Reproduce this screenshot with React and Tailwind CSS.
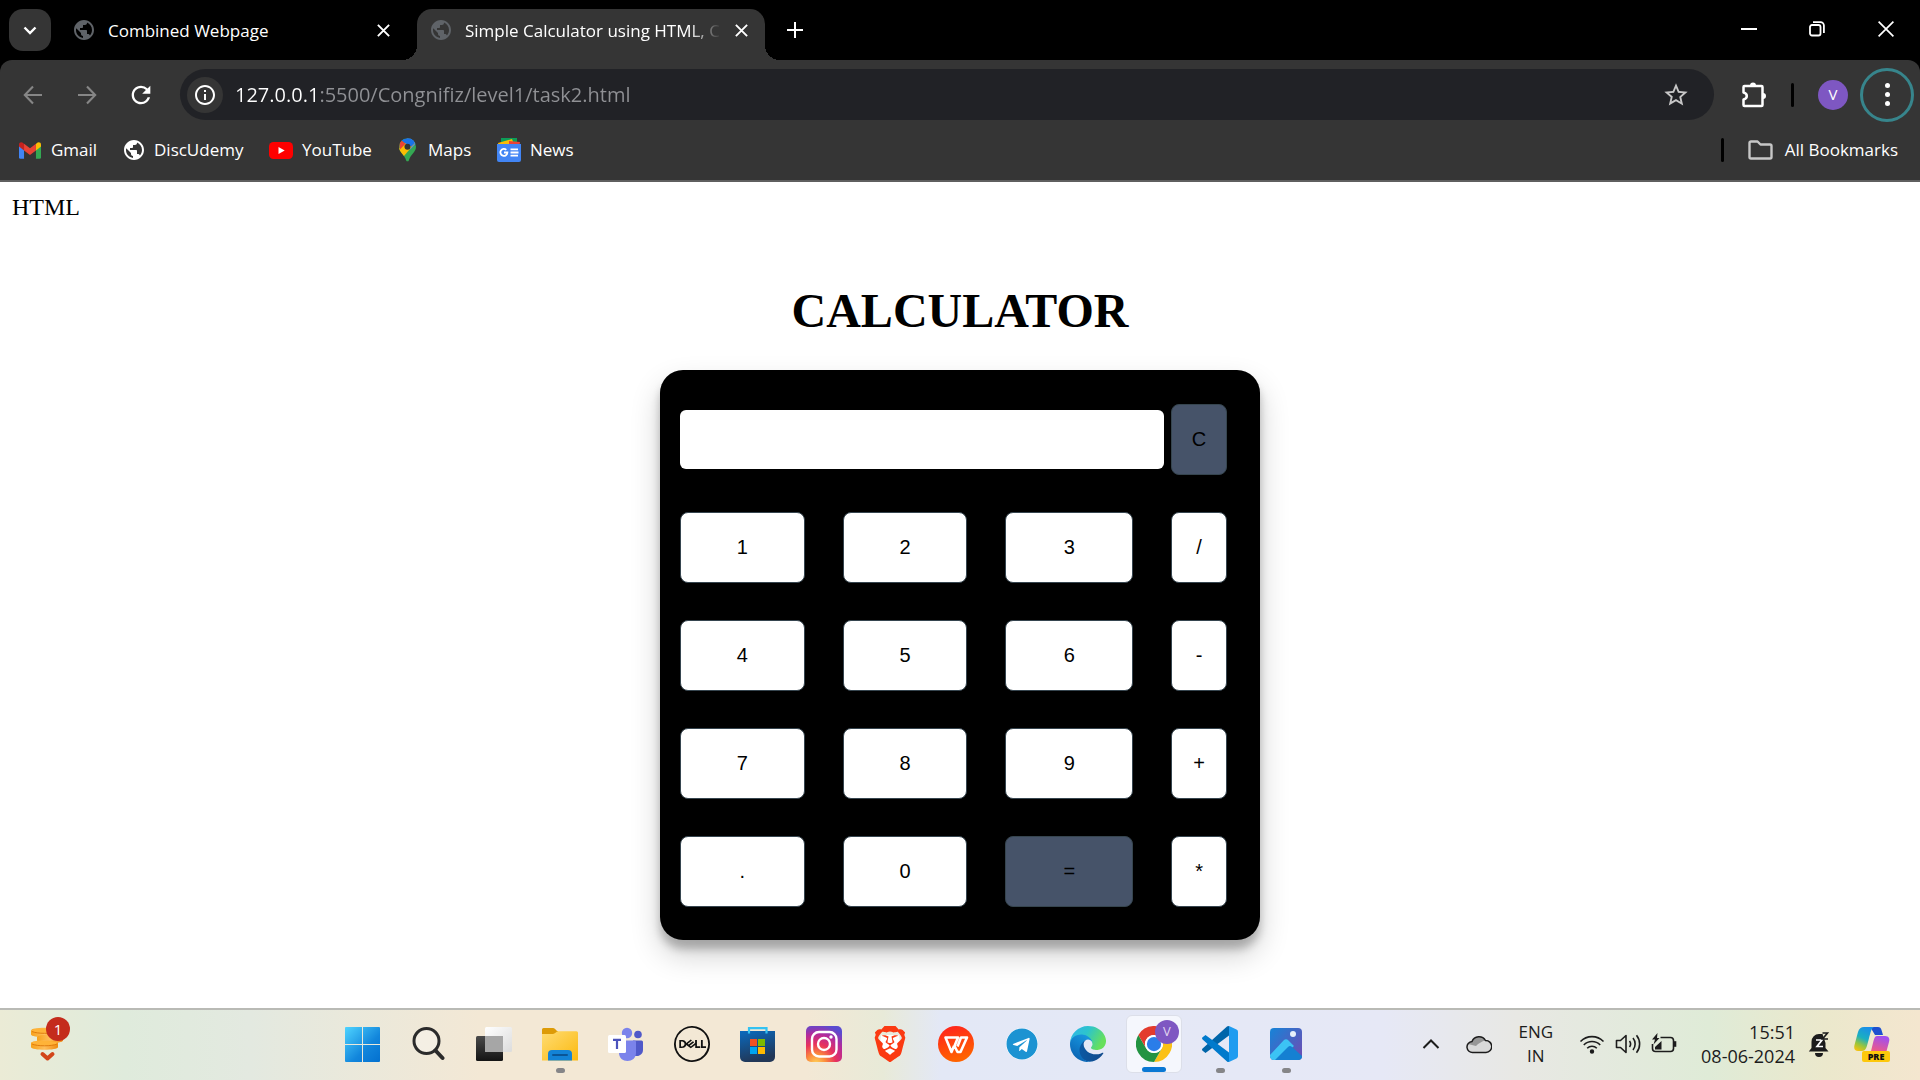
import React, { useState } from "react";
import { MdPublic, MdInfoOutline, MdStarOutline, MdRefresh } from "react-icons/md";
import { SiBrave, SiDell } from "react-icons/si";
import { FaTelegram } from "react-icons/fa";

function Cross({ className }) {
  return (
    <svg viewBox="0 0 16 16" className={className} fill="none" stroke="currentColor" strokeWidth="2">
      <path d="M2 2l12 12M14 2L2 14" />
    </svg>
  );
}

function TabStrip() {
  return (
    <header className="flex h-[60px] items-start bg-black text-white">
      <button aria-label="Search tabs" className="mt-[9px] ml-[9px] flex size-[42px] items-center justify-center rounded-[14px] bg-[#353535]">
        <svg viewBox="0 0 16 16" className="size-4" fill="none" stroke="white" strokeWidth="2.4">
          <path d="M2.5 5.5L8 11l5.500-5.500" />
        </svg>
      </button>
      <div className="mt-[9px] ml-[21px] flex h-[42px] w-[323px] items-center text-[17px]">
        <MdPublic className="size-6 text-[#5f6368]" />
        <a href="#combined" className="ml-3 flex-1 truncate pt-0.5">Combined Webpage</a>
        <button aria-label="Close Combined Webpage" className="flex size-6 items-center justify-center">
          <Cross className="size-[15px]" />
        </button>
      </div>
      <div className="relative mt-[9px] ml-[22px] flex h-[51px] w-[348px] rounded-t-[15px] bg-[#353535] pr-3 pb-[9px] pl-3 text-[17px]">
        <span className="absolute bottom-0 -left-[15px] size-[15px] bg-[radial-gradient(circle_at_0_0,#000_15px,#353535_15px)]" />
        <span className="absolute -right-[15px] bottom-0 size-[15px] bg-[radial-gradient(circle_at_100%_0,#000_15px,#353535_15px)]" />
        <div className="flex min-w-0 flex-1 items-center">
          <MdPublic className="size-6 shrink-0 text-[#5f6368]" />
          <a href="#calculator" className="ml-3 pt-0.5 whitespace-nowrap [mask-image:linear-gradient(to_right,#000_224px,transparent_256px)]">
            Simple Calculator using HTML, C
          </a>
          <button aria-label="Close Simple Calculator" className="ml-auto flex size-6 shrink-0 items-center justify-center">
            <Cross className="size-[15px]" />
          </button>
        </div>
      </div>
      <button aria-label="New tab" className="mt-[18px] ml-[18px] flex size-6 items-center justify-center">
        <svg viewBox="0 0 16 16" className="size-4" stroke="white" strokeWidth="2"><path d="M8 0v16M0 8h16" /></svg>
      </button>
      <div className="ml-auto flex">
        <button aria-label="Minimize" className="flex h-[58px] w-[68px] items-center justify-center">
          <svg viewBox="0 0 16 16" className="size-4" stroke="white" strokeWidth="2"><path d="M0 8h16" /></svg>
        </button>
        <button aria-label="Restore" className="flex h-[58px] w-[68px] items-center justify-center">
          <svg viewBox="0 0 16 16" className="size-4" fill="none" stroke="white" strokeWidth="1.8">
            <rect x="1" y="4" width="10.5" height="10.5" rx="2" />
            <path d="M4 1.2h7.5a3.4 3.4 0 0 1 3.4 3.4V12" />
          </svg>
        </button>
        <button aria-label="Close window" className="flex h-[58px] w-[69px] items-center justify-center">
          <svg viewBox="0 0 16 16" className="size-4" stroke="white" strokeWidth="1.7"><path d="M.6.6l14.8 14.8M15.4.6L.6 15.4" /></svg>
        </button>
      </div>
    </header>
  );
}

function ArrowIcon({ className }) {
  return (
    <svg viewBox="0 0 20 20" className={className} fill="none" stroke="#868686" strokeWidth="2.1">
      <path d="M19 10H2M10 1.500L1.800 10l8.200 8.500" />
    </svg>
  );
}

function Toolbar() {
  const [url, setUrl] = useState("127.0.0.1:5500/Congnifiz/level1/task2.html");
  return (
    <div className="flex h-[69px] items-center text-white">
      <button aria-label="Back" className="ml-[23px] shrink-0"><ArrowIcon className="size-5" /></button>
      <button aria-label="Forward" className="ml-[34px] shrink-0"><ArrowIcon className="size-5 rotate-180" /></button>
      <button aria-label="Reload" className="ml-[30px] shrink-0"><MdRefresh className="size-7" /></button>
      <div className="ml-[25px] flex h-[51px] flex-1 items-center rounded-full bg-[#212226] pr-6 pl-[7px]">
        <button aria-label="Site information" className="flex size-9 items-center justify-center rounded-full bg-[#353535]">
          <MdInfoOutline className="size-6" />
        </button>
        <input
          aria-label="Address"
          value={url}
          onChange={(e) => setUrl(e.target.value)}
          className="ml-3 min-w-0 flex-1 bg-[linear-gradient(to_right,#fff_82px,#909195_82px)] bg-clip-text text-[20px] text-transparent caret-white outline-none"
        />
        <button aria-label="Bookmark this tab"><MdStarOutline className="size-[28px] text-[#c7c7c7]" /></button>
      </div>
      <button aria-label="Extensions" className="ml-[26px]">
        <svg viewBox="0 0 28 28" className="size-7" fill="none" stroke="white" strokeWidth="2.500" strokeLinejoin="round">
          <path d="M4.500 5h17a1 1 0 0 1 1 1v18a1 1 0 0 1-1 1h-17a1 1 0 0 1-1-1v-5.500c4.400-1 4.400-6 0-7V6a1 1 0 0 1 1-1z" />
          <path d="M10 4.500a3 3 0 0 1 6 0zM23 12a3 3 0 0 1 0 6z" fill="white" stroke="none" />
        </svg>
      </button>
      <span className="ml-[23px] h-6 w-[3px] rounded-full bg-black" />
      <button aria-label="Profile" className="ml-6 flex size-[30px] items-center justify-center rounded-full bg-[#7e57c2] text-[15px]">V</button>
      <button aria-label="Chrome menu" className="mr-1.5 ml-3 flex size-[54px] flex-col items-center justify-center gap-1 rounded-full border-[3px] border-[#37858c]">
        <span className="size-[5px] rounded-full bg-white" />
        <span className="size-[5px] rounded-full bg-white" />
        <span className="size-[5px] rounded-full bg-white" />
      </button>
    </div>
  );
}

function GmailIcon() {
  return (
    <svg viewBox="0 0 24 18" className="h-[17px] w-[22px]">
      <path d="M0 3v13.500A1.500 1.500 0 0 0 1.500 18H5.500V7z" fill="#4285f4" />
      <path d="M24 3v13.500a1.500 1.500 0 0 1-1.500 1.500H18.500V7z" fill="#34a853" />
      <path d="M18.500 2v7L24 4.600V2.500C24 0 21.200-.8 19.500.8z" fill="#fbbc04" />
      <path d="M5.500 2v7L0 4.600V2.500C0 0 2.800-.8 4.500.8z" fill="#c5221f" />
      <path d="M5.500 9V1.700L12 6.600l6.500-4.900V9L12 13.900z" fill="#ea4335" />
    </svg>
  );
}

function MapsIcon() {
  return (
    <svg viewBox="0 0 18 25" className="h-6 w-[17px]">
      <defs><clipPath id="pin"><path d="M9 0a9 9 0 0 1 9 9c0 6-5.500 7.500-7.600 14.500-.5 1.700-2.300 1.700-2.800 0C6 17.500 0 15 0 9a9 9 0 0 1 9-9z" /></clipPath></defs>
      <g clipPath="url(#pin)">
        <path d="M0 0h18v25H0z" fill="#34a853" />
        <path d="M5 5l4-6h10v6l-7 7z" fill="#4285f4" />
        <path d="M5.500 5L0 11v5l5 3L18 4z" fill="#fbbc04" />
        <path d="M6 5L2 2 11-1l8 4-6 6z" fill="#1a73e8" />
        <path d="M0 4l2-2 5 4-6 6z" fill="#ea4335" />
      </g>
      <circle cx="9" cy="9" r="3.200" fill="#353535" />
    </svg>
  );
}

function NewsIcon() {
  return (
    <svg viewBox="0 0 24 24" className="size-6">
      <path d="M4 0h16v8H4z" fill="#0c9d58" />
      <path d="M1 5l14-4 3 8H2z" fill="#fbbc04" />
      <path d="M12 3l11 1-1 6H12z" fill="#ea4335" />
      <path d="M0 6h24v16a2 2 0 0 1-2 2H2a2 2 0 0 1-2-2z" fill="#4285f4" />
      <path d="M7 14.500h3.400A3.500 3.500 0 1 1 9.300 11.800M13.500 11.300H21M13.500 14.500h8M13.500 17.700H21" fill="none" stroke="white" strokeWidth="1.800" />
    </svg>
  );
}

function YoutubeIcon() {
  return (
    <svg viewBox="0 0 24 17" className="h-[17px] w-6">
      <rect width="24" height="17" rx="4.500" fill="#f00" />
      <path d="M9.500 5v7l6.200-3.500z" fill="white" />
    </svg>
  );
}

function Bookmark({ icon, label, className }) {
  return (
    <a href={"#" + label.toLowerCase()} className={"flex items-center " + className}>
      {icon}
      {label}
    </a>
  );
}

function Bookmarks() {
  return (
    <nav aria-label="Bookmarks" className="flex h-[53px] items-center border-b-2 border-[#5f5f5f] pr-[22px] pb-[9px] pl-[19px] text-[17px] text-white">
      <Bookmark className="w-[104px] gap-2.5" icon={<GmailIcon />} label="Gmail" />
      <Bookmark className="w-[146px] gap-2" icon={<MdPublic className="-ml-px size-6" />} label="DiscUdemy" />
      <Bookmark className="w-[130px] gap-[9px]" icon={<YoutubeIcon />} label="YouTube" />
      <Bookmark className="w-[98px] gap-3" icon={<MapsIcon />} label="Maps" />
      <Bookmark className="gap-[9px]" icon={<NewsIcon />} label="News" />
      <span className="ml-auto h-6 w-[3px] rounded-full bg-black" />
      <a href="#all" className="ml-6 flex items-center gap-3">
        <svg viewBox="0 0 25 20" className="h-5 w-[25px]" fill="none" stroke="#c7c7c7" strokeWidth="2.400" strokeLinejoin="round">
          <path d="M1.500 3a1.500 1.500 0 0 1 1.500-1.500h6.500l3 3H22A1.500 1.500 0 0 1 23.500 6v11a1.500 1.500 0 0 1-1.500 1.500H3A1.500 1.500 0 0 1 1.500 17z" />
        </svg>
        All Bookmarks
      </a>
    </nav>
  );
}

const keys = ["1", "2", "3", "/", "4", "5", "6", "-", "7", "8", "9", "+", ".", "0", "=", "*"];

function Calculator() {
  const [value, setValue] = useState("");
  const press = (k) => {
    if (k !== "=") return setValue(value + k);
    const parts = value.split(/([+\-*/])/);
    const [a, op, b] = [Number(parts[0]), parts[1], Number(parts[2])];
    const result = { "+": a + b, "-": a - b, "*": a * b, "/": a / b }[op];
    setValue(result === undefined ? value : String(result));
  };
  return (
    <section aria-label="Calculator" className="w-[600px] max-w-full rounded-[23px] bg-black pt-[34px] pr-[33px] pb-[33px] pl-5 font-['Liberation_Sans',sans-serif] text-[20px] shadow-[0_15px_30px_rgba(0,0,0,0.19),0_9px_9px_rgba(0,0,0,0.23)]">
      <div className="grid grid-cols-[125fr_125fr_128fr_56fr] items-center gap-x-[38px] gap-y-[37px]">
        <div className="col-span-4 flex items-center gap-[7px]">
          <input aria-label="Result" value={value} onChange={(e) => setValue(e.target.value)} className="h-[59px] min-w-0 flex-1 rounded-md bg-white px-3 text-right outline-none" />
          <button onClick={() => setValue("")} className="h-[71px] w-[56px] rounded-lg border border-[#36454f] bg-[#465369] pb-0.5">C</button>
        </div>
        {keys.map((k) => (
          <button
            key={k}
            onClick={() => press(k)}
            className={k === "=" ? "h-[71px] rounded-lg border border-[#36454f] bg-[#465369] pb-0.5" : "h-[71px] rounded-lg border border-[#36454f] bg-white pb-0.5"}
          >
            {k}
          </button>
        ))}
      </div>
    </section>
  );
}

function CoinsIcon() {
  return (
    <svg viewBox="0 0 36 36" className="size-9">
      <defs><linearGradient id="coin" x2="1"><stop stopColor="#f7a11b" /><stop offset=".5" stopColor="#ffbe5a" /><stop offset="1" stopColor="#f08a10" /></linearGradient></defs>
      <g fill="url(#coin)">
        <path d="M1 4.500C1 .8 28 .8 28 4.500v4C28 12 1 12 1 8.500z" />
        <path d="M7 11C7 8 33 8 33 11v3.500c0 3.500-26 3.500-26 0z" />
        <path d="M1 17c0-3.500 27-3.500 27 0v4c0 3.700-27 3.700-27 0z" />
      </g>
      <g fill="#ffb338"><ellipse cx="14.500" cy="4.500" rx="13" ry="2.200" /><ellipse cx="14.500" cy="17" rx="13" ry="2.200" /></g>
      <path d="M2 5.500c5 2.400 20 2.400 25 0M2 18c5 2.400 20 2.400 25 0" fill="none" stroke="#e07c0c" />
      <path d="M12.500 28l5 4.500 5-4.500" fill="none" stroke="#d2451a" strokeWidth="4" strokeLinecap="round" strokeLinejoin="round" />
    </svg>
  );
}

function WindowsIcon() {
  return (
    <svg viewBox="0 0 35 35" className="size-[35px]">
      <defs><linearGradient id="win" gradientUnits="userSpaceOnUse" x1="0" y1="0" x2="35" y2="35"><stop stopColor="#4fd4ff" /><stop offset=".6" stopColor="#1286dc" /><stop offset="1" stopColor="#0370cf" /></linearGradient></defs>
      <path fill="url(#win)" d="M1 0h16v17H0V1a1 1 0 0 1 1-1zM18 0h16a1 1 0 0 1 1 1v16H18zM0 18h17v17H1a1 1 0 0 1-1-1zM18 18h17v16a1 1 0 0 1-1 1H18z" />
    </svg>
  );
}

function SearchIcon() {
  return (
    <svg viewBox="0 0 34 36" className="h-9 w-[34px]" fill="none" stroke="#2b2b2b">
      <circle cx="15.500" cy="15" r="12.500" strokeWidth="3" fill="#fff" fillOpacity=".3" />
      <path d="M24.500 24.500l7 7.500" strokeWidth="4" strokeLinecap="round" />
    </svg>
  );
}

function TaskViewIcon() {
  return (
    <svg viewBox="0 0 36 36" className="size-9">
      <defs>
        <linearGradient id="tvd" x2="0" y2="1"><stop stopColor="#4a4a4a" /><stop offset="1" stopColor="#141414" /></linearGradient>
        <linearGradient id="tvl" x2="1" y2="1"><stop stopColor="#fff" /><stop offset="1" stopColor="#dcdcdc" /></linearGradient>
      </defs>
      <rect x="0" y="10" width="27" height="25" rx="1.500" fill="url(#tvd)" />
      <rect x="9" y="1" width="27" height="25" rx="1.500" fill="url(#tvl)" />
      <path d="M9 10h18v16H10.500A1.500 1.500 0 0 1 9 24.500z" fill="#a6a6a6" />
    </svg>
  );
}

function ExplorerIcon() {
  return (
    <svg viewBox="0 0 36 36" className="size-9">
      <defs><linearGradient id="fold" x2="1" y2="1"><stop stopColor="#ffdc73" /><stop offset="1" stopColor="#fbb90f" /></linearGradient></defs>
      <path d="M0 3.500A1.500 1.500 0 0 1 1.500 2h9.700c1.800 0 3 3.200 4.800 3.200V12H0z" fill="#dd9b07" />
      <path d="M0 8h11c2 0 3-2.800 5-2.800h18.500A1.500 1.500 0 0 1 36 6.700V34.500H0z" fill="url(#fold)" />
      <path d="M6 34.500V28a4 4 0 0 1 4-4h16a4 4 0 0 1 4 4v6.500z" fill="#1383d6" />
      <path d="M11 29h14" stroke="#0a5596" strokeWidth="2" strokeLinecap="round" />
    </svg>
  );
}

function TeamsIcon() {
  return (
    <svg viewBox="0 0 36 36" className="size-9">
      <circle cx="30" cy="8.500" r="3.800" fill="#5059c9" />
      <path d="M25 14.500h8.500A1.500 1.500 0 0 1 35 16v8c0 3.500-3 6-6 6h-5z" fill="#5059c9" />
      <circle cx="19" cy="7" r="5.200" fill="#7b83eb" />
      <path d="M11 14.500h15.500A1.500 1.500 0 0 1 28 16v11c0 5-4 8-8.500 8S11 32 11 27z" fill="#7b83eb" />
      <rect y="9" width="18" height="18" rx="1.500" fill="white" />
      <path d="M5 13.800h8M9 13.800V23" stroke="#4b53bc" strokeWidth="2.200" />
    </svg>
  );
}

function StoreIcon() {
  return (
    <svg viewBox="0 0 36 36" className="size-9">
      <defs><linearGradient id="store" x2=".3" y2="1"><stop stopColor="#0a6abf" /><stop offset="1" stopColor="#213757" /></linearGradient></defs>
      <path d="M0 5h35v26a5 5 0 0 1-5 5H5a5 5 0 0 1-5-5z" fill="url(#store)" />
      <path d="M9 7.500V2.200h17.500v5.300" fill="none" stroke="#33c2f2" strokeWidth="2.200" />
      <path d="M10 13h7v7h-7z" fill="#f25022" /><path d="M18 13h7v7h-7z" fill="#7fba00" />
      <path d="M10 21h7v7h-7z" fill="#00a4ef" /><path d="M18 21h7v7h-7z" fill="#ffb900" />
    </svg>
  );
}

function InstagramIcon() {
  return (
    <svg viewBox="0 0 36 36" className="size-9">
      <defs>
        <radialGradient id="ig" cx=".28" cy="1.050" r="1.100"><stop stopColor="#ffd65a" /><stop offset=".25" stopColor="#fb8a3c" /><stop offset=".5" stopColor="#e8325c" /><stop offset=".75" stopColor="#b52a9b" /><stop offset="1" stopColor="#5a4bd0" /></radialGradient>
      </defs>
      <rect width="36" height="36" rx="5" fill="url(#ig)" />
      <g fill="none" stroke="white" strokeWidth="2.400">
        <rect x="6" y="6" width="24.500" height="24.500" rx="7" />
        <circle cx="18" cy="18" r="6" />
      </g>
      <circle cx="25" cy="11" r="1.700" fill="white" />
    </svg>
  );
}

function BraveIcon() {
  return (
    <svg viewBox="0 0 36 36" className="size-9">
      <path d="M9 9h18l1 8-5 11-5 4-5-4-5-11z" fill="white" />
      <SiBrave size={36} color="#fb3a12" />
    </svg>
  );
}

function WpsIcon() {
  return (
    <svg viewBox="0 0 36 36" className="size-9">
      <defs><linearGradient id="wps" x2=".3" y2="1"><stop stopColor="#ff1f1f" /><stop offset="1" stopColor="#ff6200" /></linearGradient></defs>
      <circle cx="18" cy="18" r="18" fill="url(#wps)" />
      <path d="M16 20l-2.500 6L7.500 11.500H20l-3.500 8.500 3 6h3L29 11.500h-6l-3.500 9" fill="none" stroke="white" strokeWidth="2.600" strokeLinejoin="round" />
    </svg>
  );
}

function EdgeIcon() {
  return (
    <svg viewBox="0 0 256 256" className="size-9">
      <defs>
        <linearGradient id="ed1" x2="1"><stop stopColor="#0c59a4" /><stop offset="1" stopColor="#114a8b" /></linearGradient>
        <linearGradient id="ed2" x1=".8" x2=".3" y2="1"><stop stopColor="#1b9de2" /><stop offset=".5" stopColor="#1180cc" /><stop offset="1" stopColor="#0a61b0" /></linearGradient>
        <linearGradient id="ed3" x2="1" y2=".4"><stop stopColor="#2fb4ec" /><stop offset=".5" stopColor="#2dc4cc" /><stop offset="1" stopColor="#66e05c" /></linearGradient>
      </defs>
      <path fill="url(#ed1)" d="M231 190.500c-3.400 1.800-6.900 3.400-10.500 4.700a101.500 101.500 0 0 1-35.700 6.500c-47 0-88-32.300-88-73.900.1-11.400 6.400-21.800 16.400-27.300-42.600 1.800-53.500 46.100-53.500 72.100 0 73.400 67.700 80.800 82.200 80.800 7.900 0 19.800-2.300 26.900-4.500l1.300-.5a128.300 128.300 0 0 0 66.600-52.800c1.100-1.900.5-4.300-1.300-5.400-1.300-.6-2.900-.6-4.400.3z" />
      <path fill="url(#ed2)" d="M105.700 241.400a79.200 79.200 0 0 1-22.700-21.300 80.700 80.700 0 0 1 29.500-120c3.100-1.500 8.400-4.100 15.500-4a32.400 32.400 0 0 1 25.700 13 32 32 0 0 1 6.300 18.700c0-.2 24.500-79.600-80-79.600-43.900 0-80 41.700-80 78.200-.2 19.300 4 38.400 12.100 56a128 128 0 0 0 156.300 67.200 75.600 75.600 0 0 1-62.700-8.200z" />
      <path fill="url(#ed3)" d="M152.300 148.900c-.8 1.100-3.300 2.500-3.300 5.700 0 2.600 1.700 5.100 4.700 7.200 14.400 10 41.500 8.700 41.600 8.700 10.700 0 21.100-2.900 30.300-8.300 18.900-11 30.500-31.300 30.500-53.100.3-22.400-8-37.300-11.300-43.900C223.500 23.900 177.700 0 128 0 58 0 1 56.200 0 126.200c.5-36.500 36.800-66 80-66 3.500 0 23.500.3 42 10.100 16.300 8.600 24.900 18.900 30.800 29.200 6.200 10.700 7.300 24.100 7.300 29.500s-2.700 13.300-7.800 19.900z" />
    </svg>
  );
}

function ChromeIcon() {
  return (
    <svg viewBox="0 0 48 48" className="size-9">
      <path d="M24 12H44.800A24 24 0 0 1 24 48L34.400 30A12 12 0 0 0 24 12z" fill="#fbc116" />
      <path d="M34.400 30L24 48A24 24 0 0 1 3.200 12L13.600 30A12 12 0 0 0 34.400 30z" fill="#229342" />
      <path d="M13.600 30L3.200 12A24 24 0 0 1 44.800 12H24A12 12 0 0 0 13.600 30z" fill="#e33b2e" />
      <circle cx="24" cy="24" r="12" fill="white" />
      <circle cx="24" cy="24" r="9.500" fill="#2a7de9" />
    </svg>
  );
}

function CodeIcon() {
  return (
    <svg viewBox="0 0 36 36" className="size-9">
      <path d="M27 9.500L3.500 27 .6 24.800a1.600 1.600 0 0 1 0-2.300L25 .6a2 2 0 0 1 2-.4z" fill="#0065a9" />
      <path d="M27 26.500L3.500 9 .6 11.200a1.600 1.600 0 0 0 0 2.300L25 35.400a2 2 0 0 0 2 .4z" fill="#007acc" />
      <path d="M27 0l7.500 3.600A2.500 2.500 0 0 1 36 6v24a2.500 2.500 0 0 1-1.500 2.400L27 36z" fill="#1f9cf0" />
    </svg>
  );
}

function PhotosIcon() {
  return (
    <svg viewBox="0 0 32 32" className="size-8">
      <defs>
        <clipPath id="ph"><rect width="32" height="32" rx="4" /></clipPath>
        <linearGradient id="phb" x2="1" y2=".8"><stop stopColor="#1584d8" /><stop offset="1" stopColor="#6a4fb5" /></linearGradient>
      </defs>
      <g clipPath="url(#ph)">
        <path d="M0 0h32v32H0z" fill="url(#phb)" />
        <path d="M0 27l13.500-14.500a3.500 3.500 0 0 1 5 0L24 18 8 32H0z" fill="#3cc3f5" />
        <path d="M5 32l13-13a3 3 0 0 1 4 0l10 9v4z" fill="#1580d2" />
      </g>
      <circle cx="23" cy="6" r="3" fill="#e6f1fb" />
    </svg>
  );
}

function CopilotIcon() {
  return (
    <svg viewBox="0 0 36 36" className="size-9">
      <defs>
        <linearGradient id="cp1" x1=".6" x2=".2" y2="1"><stop stopColor="#1b8fe8" /><stop offset=".45" stopColor="#1bb0c0" /><stop offset=".75" stopColor="#9cc53a" /><stop offset="1" stopColor="#f5c211" /></linearGradient>
        <linearGradient id="cp2" x1=".6" x2=".3" y2="1"><stop stopColor="#a04ff0" /><stop offset=".6" stopColor="#e8598f" /><stop offset="1" stopColor="#ff8a4a" /></linearGradient>
      </defs>
      <path d="M17 1h7c2 0 3 1 3.500 3l1.500 5h-8l-3-5z" fill="#1d4fd0" />
      <path d="M10 1h10c-3 1-4 8-6 15-1.500 6-2.500 9-6 9H4c-3 0-4.500-2-3.500-6L4 6c1-3.500 3-5 6-5z" fill="url(#cp1)" />
      <path d="M23 10h8c4 0 5 3 4 6l-3 11c-1 4-3 6-6 6H12c4-1 4-4 6-12 2-7 2-11 5-11z" fill="url(#cp2)" />
      <rect x="8" y="25" width="28" height="11" rx="2" fill="#fdc80b" />
      <text x="22" y="34" textAnchor="middle" fontFamily="Open Sans, sans-serif" fontSize="9" fontWeight="800" fill="#111">PRE</text>
    </svg>
  );
}

const apps = [
  { name: "Start", icon: <WindowsIcon /> },
  { name: "Search", icon: <SearchIcon /> },
  { name: "Task view", icon: <TaskViewIcon /> },
  { name: "File Explorer", icon: <ExplorerIcon />, open: true },
  { name: "Teams", icon: <TeamsIcon /> },
  { name: "Dell", icon: <SiDell className="size-9 text-[#111]" /> },
  { name: "Microsoft Store", icon: <StoreIcon /> },
  { name: "Instagram", icon: <InstagramIcon /> },
  { name: "Brave", icon: <BraveIcon /> },
  { name: "WPS Office", icon: <WpsIcon /> },
  { name: "Telegram", icon: <span className="rounded-full bg-white"><FaTelegram className="size-8 text-[#1c93d2]" /></span> },
  { name: "Edge", icon: <EdgeIcon /> },
  { name: "Chrome", icon: <ChromeIcon />, active: true },
  { name: "Visual Studio Code", icon: <CodeIcon />, open: true },
  { name: "Photos", icon: <PhotosIcon />, open: true },
];

function AppButton({ app }) {
  return (
    <button aria-label={app.name} className="flex h-[68px] w-[66px] items-center justify-center">
      <span className={app.active ? "relative flex h-[58px] w-14 items-center justify-center rounded-md border border-[#dcdfe9] bg-[#f5f7fd]" : "relative flex h-[58px] w-14 items-center justify-center"}>
        {app.icon}
        {app.active && <span className="absolute top-1 right-[2px] flex size-6 items-center justify-center rounded-full bg-[#7e57c2] text-[13px] text-[#e0d5f0]">V</span>}
        {app.active && <span className="absolute bottom-0 h-[5px] w-6 rounded-full bg-[#0a78d4]" />}
        {app.open && <span className="absolute bottom-0 h-[5px] w-[9px] rounded-full bg-[#858588]" />}
      </span>
    </button>
  );
}

function Tray() {
  return (
    <div className="ml-auto flex items-center text-[#1c1c1c]">
      <button aria-label="Show hidden icons">
        <svg viewBox="0 0 18 18" className="size-[18px]" fill="none" stroke="#1c1c1c" strokeWidth="2"><path d="M1.500 13L9 5.500l7.500 7.500" /></svg>
      </button>
      <button aria-label="OneDrive" className="ml-[26px]">
        <svg viewBox="0 0 26 20" className="h-5 w-[26px]">
          <path d="M7 18.500a5.500 5.500 0 0 1-1-11A7.500 7.500 0 0 1 19.500 6.500 6 6 0 0 1 20 18.500z" fill="#d9d9d9" />
          <path d="M2 10a5.500 5.500 0 0 1 4-2.500A7.500 7.500 0 0 1 19.500 6.500C16 7 12 10 10 12z" fill="#979797" />
          <path d="M7 18.500a5.500 5.500 0 0 1-1-11A7.500 7.500 0 0 1 19.500 6.500 6 6 0 0 1 20 18.500z" fill="none" stroke="#1c1c1c" strokeWidth="1.500" />
        </svg>
      </button>
      <button className="ml-[26px] text-center text-[17px] leading-6">ENG<br />IN</button>
      <button aria-label="Network, volume and battery" className="ml-[26px] flex items-center gap-[10px]">
        <svg viewBox="0 0 26 22" className="h-[22px] w-[26px]" fill="none" stroke="#1c1c1c" strokeWidth="1.600">
          <path d="M1.500 8.500a16 16 0 0 1 23 0M4.800 12a11.500 11.500 0 0 1 16.400 0M8.200 15.300a6.800 6.800 0 0 1 9.600 0" />
          <circle cx="13" cy="18.500" r="1.400" fill="#1c1c1c" />
        </svg>
        <svg viewBox="0 0 26 22" className="h-[22px] w-[26px]" fill="none" stroke="#1c1c1c" strokeWidth="1.600" strokeLinejoin="round">
          <path d="M1.500 7.500h4l5.500-5v17l-5.500-5h-4zM14.500 8a5 5 0 0 1 0 6M18 5a9.500 9.500 0 0 1 0 12M21.500 2.200a14 14 0 0 1 0 17.600" />
        </svg>
        <svg viewBox="0 0 26 22" className="h-[22px] w-[26px]" fill="none" stroke="#1c1c1c" strokeWidth="1.600">
          <path d="M9.500 4.500h10a3 3 0 0 1 3 3v8a3 3 0 0 1-3 3h-15a3 3 0 0 1-3-3V11" />
          <path d="M23 9h1.500v4H23z" fill="#1c1c1c" />
          <path d="M10.500 8v8.500H4V14zM6.500 0L1 6.500h3l-1.500 5L8.500 5H6z" fill="#1c1c1c" stroke="none" />
        </svg>
      </button>
      <button className="ml-6 text-right text-[18px] leading-6">15:51<br />08-06-2024</button>
      <button aria-label="Notifications" className="ml-[13px]">
        <svg viewBox="0 0 24 28" className="h-7 w-6">
          <path d="M3.500 12a7.500 7.500 0 0 1 8-8h3l3 9v5l3 3.500H.8L3.500 18zM7 23h8a4 4 0 0 1-8 0z" fill="#1c1c1c" />
          <path d="M8 10h6l-5 6.500h6" fill="none" stroke="white" strokeWidth="1.700" />
          <path d="M14.500 3h5l-5 6h5.500" fill="none" stroke="#1c1c1c" strokeWidth="1.600" />
        </svg>
      </button>
      <button aria-label="Copilot" className="mr-[30px] ml-[22px]"><CopilotIcon /></button>
    </div>
  );
}

function Taskbar() {
  return (
    <footer className="flex h-[72px] items-center border-t-2 border-[#b9bab5] bg-[linear-gradient(to_right,#ebebd6_0%,#dfebdc_6.500%,#e3e9e0_13%,#f3e8d5_25%,#f3e8d5_42%,#e8ead8_46%,#e3e8f6_49%,#e6e8f6_72%,#e8e8e4_79%,#dfebd7_89%,#ebe8cc_95%,#f4e6cf_100%)] pb-0.5">
      <div className="flex w-[329px] shrink-0 pl-[30px]">
        <button aria-label="Widgets" className="relative">
          <CoinsIcon />
          <span className="absolute -top-[9px] left-4 flex size-6 items-center justify-center rounded-full bg-[#c42b1c] text-[15px] text-white">1</span>
        </button>
      </div>
      <div className="flex">
        {apps.map((app) => <AppButton key={app.name} app={app} />)}
      </div>
      <Tray />
    </footer>
  );
}

export default function App() {
  return (
    <div className="flex min-h-screen flex-col bg-white font-['Open_Sans','Noto_Sans',sans-serif]">
      <TabStrip />
      <div className="bg-black">
        <div className="rounded-t-xl bg-[#353535]">
          <Toolbar />
          <Bookmarks />
        </div>
      </div>
      <main className="flex-1 p-3 font-['Liberation_Serif',serif] text-black">
        <p className="text-[24px] leading-[27px]">HTML</p>
        <div className="mt-[63px] flex flex-col items-center">
          <h1 className="mb-8 text-[48px] leading-[54px] font-bold">CALCULATOR</h1>
          <Calculator />
        </div>
      </main>
      <Taskbar />
    </div>
  );
}
